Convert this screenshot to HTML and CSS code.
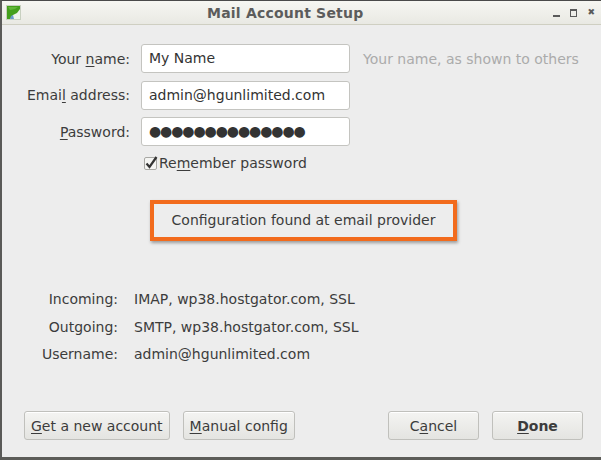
FILE: index.html
```html
<!DOCTYPE html>
<html>
<head>
    <title>Mail Account Setup</title>
    <link rel="stylesheet" href="styles.css">
</head>
<body>
    <div class="window">
        <div class="titlebar">
            <div class="app-icon">
                <svg width="15" height="15" viewBox="0 0 15 15">
                    <rect x="0.5" y="0.5" width="14" height="14" fill="#eef3ea" stroke="#c8d0c0"/>
                    <path d="M1 1 H14 V4 L11 8 L7 10 L4 14 H1 Z" fill="#44a01c"/>
                    <path d="M2 2 H12 L9 4 L4 5 Z" fill="#63b83a"/>
                    <path d="M5 11 L7 10 L8 14 H4 Z" fill="#6a9ac8"/>
                </svg>
            </div>
            <div class="title">Mail Account Setup</div>
            <div class="controls">
                <span class="ctl-min"></span>
                <span class="ctl-max"></span>
                <span class="ctl-close">✖</span>
            </div>
        </div>

        <div class="content">
            <div class="form">
                <label class="lbl">Your <u>n</u>ame:</label>
                <div class="field">My Name</div>
                <div class="hint">Your name, as shown to others</div>

                <label class="lbl">Emai<u>l</u> address:</label>
                <div class="field">admin@hgunlimited.com</div>
                <div></div>

                <label class="lbl"><u>P</u>assword:</label>
                <div class="field pass">●●●●●●●●●●●●●●</div>
                <div></div>

                <div></div>
                <div class="remember">
                    <span class="check">
                        <svg width="14" height="14" viewBox="0 0 14 14">
                            <rect x="0.5" y="1.5" width="12" height="12" rx="1.5" fill="#f4f4f2" stroke="#a8a8a4"/>
                            <path d="M2.5 7.5 L5.5 11 L12.5 1" fill="none" stroke="#333" stroke-width="2.2"/>
                        </svg>
                    </span>
                    Re<u>m</u>ember password
                </div>
                <div></div>
            </div>

            <div class="status-wrap">
                <div class="status">Configuration found at email provider</div>
            </div>

            <div class="info">
                <div class="info-lbl">Incoming:</div>
                <div>IMAP, wp38.hostgator.com, SSL</div>
                <div class="info-lbl">Outgoing:</div>
                <div>SMTP, wp38.hostgator.com, SSL</div>
                <div class="info-lbl">Username:</div>
                <div>admin@hgunlimited.com</div>
            </div>

            <div class="buttons">
                <div class="btn-group">
                    <button class="btn"><u>G</u>et a new account</button>
                    <button class="btn"><u>M</u>anual config</button>
                </div>
                <div class="btn-group">
                    <button class="btn fixed">C<u>a</u>ncel</button>
                    <button class="btn fixed bold"><u>D</u>one</button>
                </div>
            </div>
        </div>
    </div>
</body>
</html>
```

FILE: styles.css
```css
html, body {
    margin: 0;
    padding: 0;
    background: #ededed;
}
body {
    font-family: "DejaVu Sans", sans-serif;
    font-size: 14px;
    color: #3c3c3c;
}
u {
    text-decoration-thickness: 1px;
    text-underline-offset: 2px;
}
.window {
    width: 601px;
    height: 460px;
    box-sizing: border-box;
    border-top: 1px solid #4a4a4a;
    border-left: 2px solid #5a5a58;
    border-bottom: 3px solid #5c5c58;
    background: #ededed;
    display: flex;
    flex-direction: column;
}
.titlebar {
    height: 23px;
    display: flex;
    align-items: center;
    background: linear-gradient(#f6f6f2, #e9e9e3);
    border-bottom: 1px solid #cfcfc2;
    padding: 0 6px 0 4px;
}
.app-icon {
    width: 15px;
    height: 15px;
    display: flex;
}
.title {
    flex: 1;
    text-align: center;
    font-weight: bold;
    font-size: 14px;
    color: #5c5c5c;
    padding-right: 4px;
    letter-spacing: 0.2px;
}
.controls {
    display: flex;
    align-items: center;
    gap: 10px;
    color: #5a5a5a;
}
.ctl-min {
    width: 7px;
    height: 2px;
    background: #5a5a5a;
    margin-top: 6px;
}
.ctl-max {
    width: 5px;
    height: 5px;
    border: 1px solid #5a5a5a;
    border-top-width: 2px;
}
.ctl-close {
    font-size: 9px;
    line-height: 1;
}
.content {
    flex: 1;
    display: flex;
    flex-direction: column;
    padding: 19px 18px 0 0;
}
.form {
    display: grid;
    grid-template-columns: 128px 209px auto;
    grid-auto-rows: 29px;
    column-gap: 11px;
    row-gap: 7.5px;
    align-items: center;
}
.lbl {
    text-align: right;
}
.field {
    height: 29px;
    box-sizing: border-box;
    background: #fff;
    border: 1px solid #c4c4c0;
    border-radius: 3px;
    padding: 0 7px;
    line-height: 27px;
    color: #333;
}
.field.pass {
    font-size: 14px;
    letter-spacing: -1.1px;
    color: #333;
}
.hint {
    color: #ababab;
    margin-left: 2px;
    white-space: nowrap;
}
.remember {
    display: flex;
    align-items: center;
    margin-left: 3px;
    height: 18px;
    align-self: start;
}
.check {
    display: flex;
    margin-right: 1px;
}
.status-wrap {
    display: flex;
    padding-left: 148px;
    margin-top: 17px;
}
.status {
    width: 299px;
    height: 33px;
    border: 4px solid #f26b1d;
    line-height: 33px;
    text-align: center;
    color: #3c3c3c;
    box-shadow: 1px 2px 3px rgba(0,0,0,0.35);
}
.info {
    display: grid;
    grid-template-columns: 116px auto;
    column-gap: 16px;
    grid-auto-rows: 27.5px;
    align-items: center;
    margin-top: 45px;
}
.info-lbl {
    text-align: right;
}
.buttons {
    display: flex;
    justify-content: space-between;
    margin-top: auto;
    margin-bottom: 17px;
    padding-left: 22px;
}
.btn-group {
    display: flex;
    gap: 13px;
}
.btn {
    font-family: "DejaVu Sans", sans-serif;
    font-size: 14px;
    color: #3c3c3c;
    height: 29px;
    padding: 0 6px;
    background: linear-gradient(#f4f4f2, #e4e4e1);
    border: 1px solid #c0c0bc;
    border-radius: 3px;
    box-shadow: inset 0 1px 0 #fff;
}
.btn.fixed {
    width: 91px;
}
.btn.bold {
    font-weight: bold;
}
```
